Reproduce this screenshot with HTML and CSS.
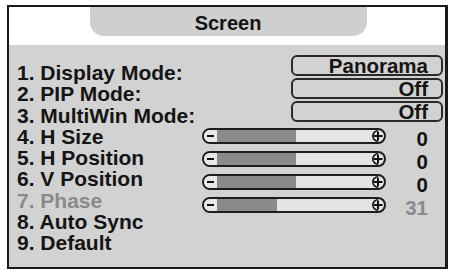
FILE: index.html
```html
<!DOCTYPE html>
<html>
<head>
<meta charset="utf-8">
<link rel="stylesheet" href="styles.css">
</head>
<body>
<div class="osd">
  <div class="header"><div class="tab">Screen</div></div>
  <div class="panel">
    <div class="labels">
      <div class="label">1. Display Mode:</div>
      <div class="label">2. PIP Mode:</div>
      <div class="label">3. MultiWin Mode:</div>
      <div class="label">4. H Size</div>
      <div class="label">5. H Position</div>
      <div class="label">6. V Position</div>
      <div class="label dim">7. Phase</div>
      <div class="label">8. Auto Sync</div>
      <div class="label">9. Default</div>
    </div>
    <div class="controls">
      <div class="box">Panorama</div>
      <div class="box">Off</div>
      <div class="box">Off</div>
      <div class="sliders">
        <div class="srow">
          <div class="slider"><span class="minus"></span><span class="fill" style="width:79px"></span><span class="rest"></span><svg class="plus" viewBox="0 0 12 12"><path class="arc" d="M6 0.8A5.2 5.2 0 0 0 6 11.2"/><path d="M6 1.5V10.5M1.5 6H10.5"/></svg></div>
          <span class="val">0</span>
        </div>
        <div class="srow">
          <div class="slider"><span class="minus"></span><span class="fill" style="width:79px"></span><span class="rest"></span><svg class="plus" viewBox="0 0 12 12"><path class="arc" d="M6 0.8A5.2 5.2 0 0 0 6 11.2"/><path d="M6 1.5V10.5M1.5 6H10.5"/></svg></div>
          <span class="val">0</span>
        </div>
        <div class="srow">
          <div class="slider"><span class="minus"></span><span class="fill" style="width:79px"></span><span class="rest"></span><svg class="plus" viewBox="0 0 12 12"><path class="arc" d="M6 0.8A5.2 5.2 0 0 0 6 11.2"/><path d="M6 1.5V10.5M1.5 6H10.5"/></svg></div>
          <span class="val">0</span>
        </div>
        <div class="srow">
          <div class="slider"><span class="minus"></span><span class="fill" style="width:60px"></span><span class="rest"></span><svg class="plus" viewBox="0 0 12 12"><path class="arc" d="M6 0.8A5.2 5.2 0 0 0 6 11.2"/><path d="M6 1.5V10.5M1.5 6H10.5"/></svg></div>
          <span class="val dim">31</span>
        </div>
      </div>
    </div>
  </div>
</div>
</body>
</html>
```
FILE: styles.css
```css
html, body {
  margin: 0;
  padding: 0;
  background: #ffffff;
}
body {
  font-family: "Liberation Sans", Arial, sans-serif;
  font-weight: bold;
  color: #141414;
}
.osd {
  box-sizing: border-box;
  width: 441px;
  height: 264px;
  margin: 5px 0 0 7px;
  border-style: solid;
  border-color: #1a1a1a;
  border-width: 2px 3px 2px 2px;
  display: flex;
  flex-direction: column;
  background: #ffffff;
}
.header {
  height: 38px;
  display: flex;
  justify-content: center;
  background: #ffffff;
}
.tab {
  width: 277px;
  height: 29px;
  box-sizing: border-box;
  padding-top: 3px;
  line-height: 26px;
  font-size: 20px;
  text-align: center;
  background: #cfcfcf;
  border-radius: 0 0 14px 14px;
  margin-left: 2px;
}
.panel {
  flex: 1;
  background: #d2d2d2;
  display: flex;
  padding: 0 2px 0 8px;
}
.labels {
  flex: 1;
  padding-top: 17px;
  font-size: 21px;
  line-height: 21.25px;
}
.label { white-space: nowrap; }
.dim { color: #8a8a8a; }
.controls {
  width: 241px;
  padding-top: 10px;
  display: flex;
  flex-direction: column;
}
.box {
  align-self: flex-end;
  box-sizing: border-box;
  width: 152px;
  height: 21px;
  margin-bottom: 2px;
  border: 2px solid #2a2a2a;
  border-radius: 6px;
  padding-right: 13px;
  text-align: right;
  font-size: 20.5px;
  line-height: 17px;
}
.sliders {
  margin-top: 4px;
  display: flex;
  flex-direction: column;
  gap: 7px;
}
.srow {
  display: flex;
  align-items: flex-start;
  height: 16px;
}
.slider {
  box-sizing: border-box;
  width: 184px;
  height: 16px;
  border: 2px solid #1e1e1e;
  border-radius: 8px;
  overflow: hidden;
  display: flex;
  background: #e4e4e4;
}
.minus {
  width: 13px;
  flex: none;
  background: #e8e8e8;
  display: flex;
  align-items: center;
  padding-left: 3px;
  box-sizing: border-box;
}
.minus::before {
  content: "";
  width: 7px;
  height: 2px;
  background: #111;
}
.fill {
  flex: none;
  background: #8a8a8a;
}
.rest {
  flex: 1;
  background: #e4e4e4;
}
.plus {
  width: 12px;
  height: 12px;
  flex: none;
  fill: none;
  stroke: #111;
}
.plus .arc { stroke-width: 1.6; }
.plus path { stroke-width: 2; }
.val {
  width: 42px;
  text-align: right;
  font-size: 20.5px;
  line-height: 16px;
  padding-top: 3px;
}
```
